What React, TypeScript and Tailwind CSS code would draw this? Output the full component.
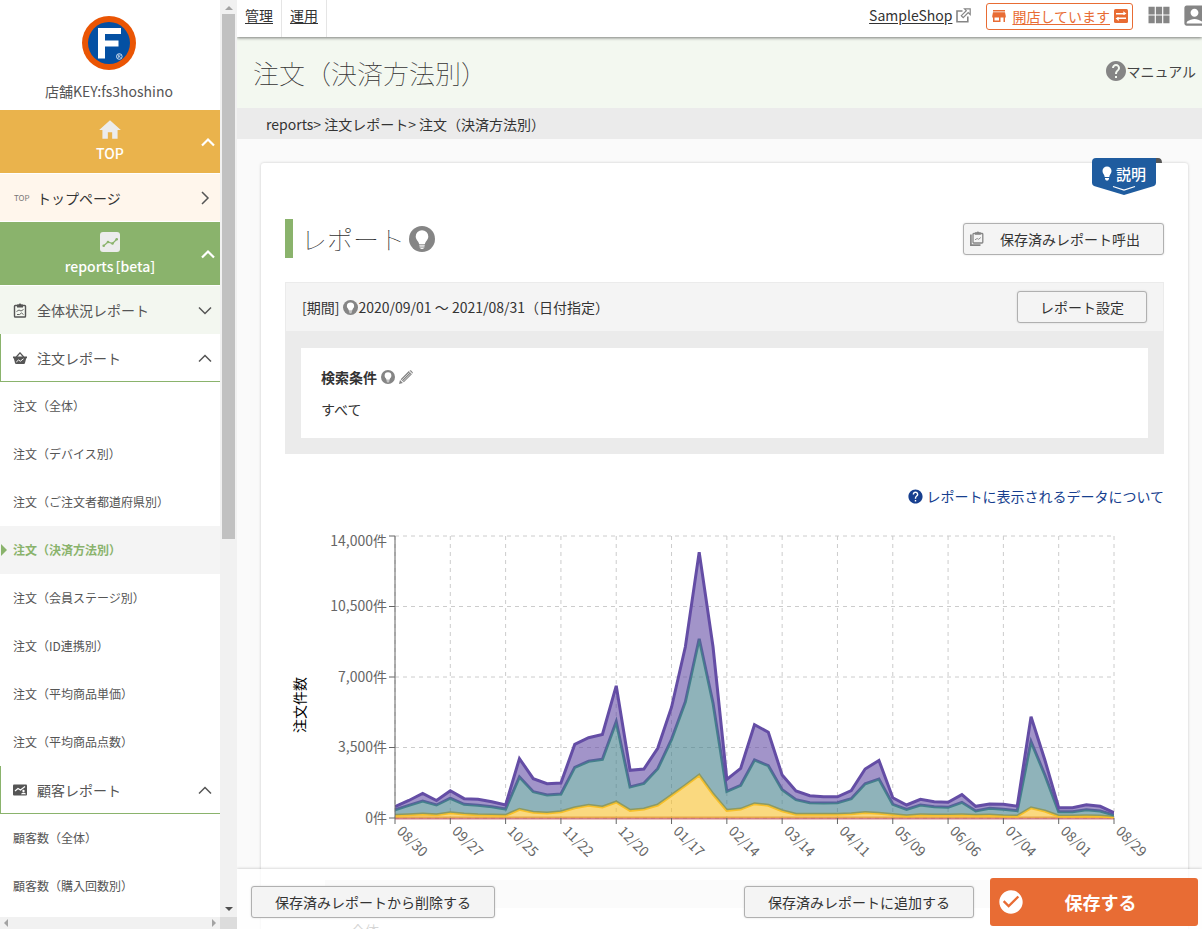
import React from "react";
import {
  MdAccountBox,
  MdCheckCircle,
  MdHelp,
  MdHome,
  MdStore,
  MdViewModule,
} from "react-icons/md";

/* ---------- icons ---------- */

function LogoMark() {
  return (
    <svg viewBox="0 0 54 54" className="size-[54px]" role="img" aria-label="F">
      <circle cx="27" cy="27" r="27" fill="#ea5504" />
      <circle cx="27" cy="27" r="21" fill="#0450a3" />
      <path d="M16 12h23v6H23v6.500h13.500v6H23V42.500h-7z" fill="#fff" />
      <circle cx="37.300" cy="40.500" r="2.800" fill="none" stroke="#fff" strokeWidth="0.800" />
      <path d="M36.300 42v-3h1.400l.6.800-.6.800h-1.200m1 0 1 1.400" fill="none" stroke="#fff" strokeWidth="0.600" />
    </svg>
  );
}

function Chevron({ dir, bold }: { dir: "up" | "down" | "right"; bold?: boolean }) {
  const d = dir === "up" ? "M2 10.500 8 4.500l6 6" : dir === "down" ? "M2 4.500l6 6 6-6" : "M5 1l6 6-6 6";
  return (
    <svg viewBox="0 0 16 14" className="h-3.5 w-4 shrink-0" aria-hidden="true">
      <path d={d} fill="none" stroke="currentColor" strokeWidth={bold ? 2.2 : 1.5} />
    </svg>
  );
}

function ChartTile() {
  return (
    <svg viewBox="0 0 20 20" className="size-5" aria-hidden="true">
      <rect width="20" height="20" rx="3" fill="#ececec" />
      <path d="M3.500 14 8 10l4.500 1.500L17 7" fill="none" stroke="#8ab36c" strokeWidth="1.200" />
      <g fill="#8ab36c">
        <circle cx="3.700" cy="13.800" r="1.300" />
        <circle cx="8" cy="10" r="1.300" />
        <circle cx="12.500" cy="11.500" r="1.300" />
        <circle cx="16.700" cy="7.300" r="1.300" />
      </g>
    </svg>
  );
}

function Clipboard() {
  return (
    <svg viewBox="0 0 14 15" className="h-[15px] w-3.5 shrink-0" aria-hidden="true" fill="none" stroke="currentColor">
      <rect x="1.500" y="2.500" width="11" height="11.500" rx="0.800" strokeWidth="1.400" />
      <path d="M4 1.500h1.600a1.500 1.500 0 0 1 2.800 0H10v3H4z" fill="currentColor" stroke="none" />
      <path d="M3.500 8.500 6 7l2 1 2.500-1.500M4 11.500h2.500l2-1.500 2 1.500" strokeWidth="0.900" />
    </svg>
  );
}

function StackedClipboard() {
  return (
    <svg viewBox="0 0 14 15" className="h-[15px] w-3.5 shrink-0" aria-hidden="true" fill="none" stroke="#858585">
      <path d="M.9 3.500v10.600h9.600" strokeWidth="1.700" />
      <rect x="3" y="2.500" width="9.800" height="9.500" rx="0.800" strokeWidth="1.300" />
      <path d="M5 1.300h1.600a1.400 1.400 0 0 1 2.600 0H10.800v2.500H5z" fill="#858585" stroke="none" />
      <path d="M5 8.800 7.200 7.500l1.400.8 2.200-1.800" strokeWidth="0.900" />
    </svg>
  );
}

function CustomerTile() {
  return (
    <svg viewBox="0 0 14 12" className="h-3 w-3.5 shrink-0" aria-hidden="true">
      <rect y="0.500" width="14" height="11" rx="1" fill="currentColor" />
      <path d="M2 7 5 4.500 7.500 6 12 2.500" fill="none" stroke="#fff" strokeWidth="1.200" />
      <circle cx="10.500" cy="7" r="1.200" fill="#fff" />
      <path d="M8 10.300c0-2.200 5-2.200 5 0z" fill="#fff" />
    </svg>
  );
}

function Basket() {
  return (
    <svg viewBox="0 0 14 12" className="h-3 w-3.5 shrink-0" aria-hidden="true">
      <path d="M3.300 5 7 .9 10.700 5" fill="none" stroke="currentColor" strokeWidth="1.300" />
      <path d="M0 4.500h14v1.700h-.8L12 11q-.2 1-1.200 1H3.200q-1 0-1.200-1L.8 6.200H0z" fill="currentColor" />
      <path d="M3.300 10 5.500 8l1.800 1.200L10.500 6.800" fill="none" stroke="#fff" strokeWidth="1" />
    </svg>
  );
}

function Bulb({ className }: { className: string }) {
  return (
    <svg viewBox="0 0 26 26" className={className} aria-hidden="true">
      <circle cx="13" cy="13" r="13" fill="#858585" />
      <path d="M13 4.200a6.300 6.300 0 0 0-6.300 6.300c0 2.300 1.300 3.700 2.300 5 .6.900.9 1.500 1.100 2.500h5.800c.2-1 .5-1.600 1.100-2.500 1-1.300 2.300-2.700 2.300-5A6.300 6.300 0 0 0 13 4.200z" fill="#fff" />
      <path d="M10.300 19.200h5.400M10.500 20.900h5M11.500 22.400h3" stroke="#fff" strokeWidth="1" />
    </svg>
  );
}

function Pencil() {
  return (
    <svg viewBox="0 0 14 14" className="size-3.5" aria-hidden="true">
      <path d="M0 14l1-4 2.900 2.900zM1.700 9.200 9.800 1.100l3.100 3.100-8.100 8.100zM10.500.6a1.300 1.300 0 0 1 1.700 0l1.300 1.300c.5.500.5 1.200 0 1.600z" fill="#858585" />
      <path d="M2.800 10.200 10.500 2.500M4 11.400l7.700-7.700" stroke="#e4e4e4" strokeWidth="0.800" />
    </svg>
  );
}

function External() {
  return (
    <svg viewBox="0 0 15 15" className="size-[15px]" aria-hidden="true" fill="none" stroke="#858585">
      <path d="M6.500 3H1v10.800h10.800V8.500" strokeWidth="1.600" />
      <path d="M8.500.8h5.700v5.700l-2-1.900-5 5-1.900-1.900 5-5z" strokeWidth="1.200" />
    </svg>
  );
}

function Swap() {
  return (
    <svg viewBox="0 0 14 14" className="size-3.5" aria-hidden="true">
      <rect width="14" height="14" rx="1.500" fill="#e86c34" />
      <path d="M2 4.800h9M12 9.200H3" stroke="#fff" strokeWidth="1.400" />
      <path d="M9.300 2.200 12.500 4.800 9.300 6zM4.700 8 1.500 9.200l3.200 2.700z" fill="#fff" />
    </svg>
  );
}

/* ---------- sidebar ---------- */

const orderItems = [
  "注文（全体）",
  "注文（デバイス別）",
  "注文（ご注文者都道府県別）",
  "注文（決済方法別）",
  "注文（会員ステージ別）",
  "注文（ID連携別）",
  "注文（平均商品単価）",
  "注文（平均商品点数）",
];
const customerItems = ["顧客数（全体）", "顧客数（購入回数別）"];

function SubItem({ label, active }: { label: string; active?: boolean }) {
  return (
    <li>
      <a
        href="#"
        className={
          active
            ? "relative flex h-12 items-center bg-[#f4f4f4] pl-[13px] text-xs font-bold text-[#8ab36c]"
            : "flex h-12 items-center pl-[13px] text-xs"
        }
      >
        {active && (
          <span className="absolute left-px border-y-6 border-l-6 border-y-transparent border-l-[#8ab36c]" />
        )}
        {label}
      </a>
    </li>
  );
}

function GroupButton({ icon, label }: { icon: React.ReactNode; label: string }) {
  return (
    <button type="button" className="flex h-12 w-full items-center border-b border-l border-[#8ab36c] pr-[7px] pl-3">
      {icon}
      <span className="ml-2.5 flex-1 text-left">{label}</span>
      <Chevron dir="up" />
    </button>
  );
}

function Sidebar() {
  return (
    <aside className="flex w-[237px] shrink-0 flex-col bg-white">
      <div className="flex min-h-0 flex-1">
        <div className="w-[220px] overflow-hidden text-sm text-[#555]">
          <div className="flex h-[110px] flex-col items-center pt-4 pr-0.5">
            <LogoMark />
            <p className="mt-[11px] text-[#555]">店舗KEY:fs3hoshino</p>
          </div>
          <button type="button" className="flex h-[63px] w-full items-center bg-[#eab34c] pr-1 text-white">
            <span className="flex flex-1 flex-col items-center pb-[3px] pl-5">
              <MdHome className="size-[26px] text-[#ececec]" aria-hidden="true" />
              <span className="leading-5 font-medium">TOP</span>
            </span>
            <Chevron dir="up" bold />
          </button>
          <a href="#" className="flex h-[49px] items-center border-y border-white bg-[#fff6ec] pr-[7px] pl-3.5">
            <span className="w-[23px] text-[8px] text-[#777]" aria-hidden="true">TOP</span>
            <span className="flex-1 text-[#333]">トップページ</span>
            <Chevron dir="right" />
          </a>
          <button type="button" className="flex h-[63px] w-full items-center bg-[#8ab36c] pr-1 text-white">
            <span className="flex flex-1 flex-col items-center gap-1 pl-5">
              <ChartTile />
              <span className="flex gap-0.5 leading-5 font-medium">
                <span>reports</span>
                <span>[beta]</span>
              </span>
            </span>
            <Chevron dir="up" bold />
          </button>
          <button
            type="button"
            className="flex h-[49px] w-full items-center border-t border-white bg-[#f3f7f0] pr-[7px] pl-[13px]"
          >
            <Clipboard />
            <span className="ml-2.5 flex-1 text-left">全体状況レポート</span>
            <Chevron dir="down" />
          </button>
          <GroupButton icon={<Basket />} label="注文レポート" />
          <ul>
            {orderItems.map((label, i) => (
              <SubItem key={label} label={label} active={i === 3} />
            ))}
          </ul>
          <GroupButton icon={<CustomerTile />} label="顧客レポート" />
          <ul>
            {customerItems.map((label) => (
              <SubItem key={label} label={label} />
            ))}
          </ul>
        </div>
        <div className="flex flex-1 flex-col items-center justify-between bg-[#f1f1f1] py-1.5">
          <span className="border-x-4 border-b-4 border-x-transparent border-b-[#a3a3a3]" />
          <span className="mt-1 h-[58%] w-[13px] bg-[#c1c1c1]" />
          <span className="flex-1" />
          <span className="border-x-4 border-t-4 border-x-transparent border-t-[#505050]" />
        </div>
      </div>
      <div className="flex h-3">
        <div className="flex w-[220px] items-center justify-between bg-[#f1f1f1] px-1">
          <span className="border-y-4 border-r-4 border-y-transparent border-r-[#a3a3a3]" />
          <span className="border-y-4 border-l-4 border-y-transparent border-l-[#a3a3a3]" />
        </div>
        <div className="flex-1 bg-[#dcdcdc]" />
      </div>
    </aside>
  );
}

/* ---------- chart ---------- */

const totals = [
  570, 870, 1215, 870, 1350, 960, 930, 810, 645, 2950, 1950, 1700, 1735, 3655, 3985, 4150, 6560, 2370, 2430, 3460, 5500,
  8500, 13200, 8500, 1920, 2465, 4630, 4260, 2130, 1340, 1105, 1055, 1055, 1360, 2430, 2860, 1005, 645, 930, 810, 780,
  1160, 580, 700, 680, 590, 5030, 2880, 510, 510, 660, 580, 265,
];
const middle = [
  400, 630, 845, 645, 980, 680, 630, 560, 445, 2035, 1305, 1140, 1190, 2515, 2815, 2915, 4780, 1540, 1720, 2445, 3905,
  5770, 8900, 5705, 1325, 1625, 2880, 2595, 1405, 910, 760, 745, 760, 960, 1700, 1935, 680, 430, 645, 560, 530, 780, 350,
  480, 430, 360, 3795, 2135, 310, 310, 410, 350, 150,
];
const lower = [
  135, 165, 200, 165, 255, 200, 165, 150, 135, 430, 285, 250, 310, 510, 630, 545, 795, 380, 445, 645, 1125, 1620, 2130,
  1190, 380, 445, 710, 630, 360, 190, 190, 185, 185, 215, 275, 235, 175, 115, 165, 150, 150, 165, 135, 150, 115, 100,
  510, 345, 100, 100, 115, 100, 50,
];
const base = totals.map(() => 0);

const dates = [
  "08/30", "09/27", "10/25", "11/22", "12/20", "01/17", "02/14",
  "03/14", "04/11", "05/09", "06/06", "07/04", "08/01", "08/29",
];
const levels = ["0件", "3,500件", "7,000件", "10,500件", "14,000件"];

const LEFT = 110;
const TOP = 16;
const PLOT_W = 719;
const PLOT_H = 282;
const BOTTOM = TOP + PLOT_H;

const px = (i: number) => LEFT + (i * PLOT_W) / (totals.length - 1);
const py = (v: number) => BOTTOM - (v * PLOT_H) / 14000;
const line = (values: number[]) => values.map((v, i) => `${px(i)},${py(v)}`);

function Band({ upper, under, color }: { upper: number[]; under: number[]; color: string }) {
  return (
    <g>
      <polygon points={[...line(upper), ...line(under).reverse()].join(" ")} fill={color} fillOpacity="0.6" />
      <polyline points={line(upper).join(" ")} fill="none" stroke={color} strokeWidth="3" />
    </g>
  );
}

function OrderChart() {
  return (
    <svg viewBox="0 0 879 344" className="block w-full" role="img" aria-label="注文件数">
      <clipPath id="plot">
        <rect x={LEFT} y={TOP} width={PLOT_W} height={PLOT_H + 2} />
      </clipPath>
      <g stroke="#ccc" strokeDasharray="4 4">
        {levels.map((l, i) => (
          <line key={l} x1={LEFT} x2={LEFT + PLOT_W} y1={py(i * 3500)} y2={py(i * 3500)} />
        ))}
        {dates.map((d, i) => (
          <line key={d} x1={px(i * 4)} x2={px(i * 4)} y1={TOP} y2={BOTTOM} />
        ))}
      </g>
      <g clipPath="url(#plot)">
        <polyline points={line(base).join(" ")} fill="none" stroke="#bf4a4f" strokeOpacity="0.7" strokeWidth="3" />
        <Band upper={lower} under={base} color="#f7c02a" />
        <Band upper={middle} under={lower} color="#44808c" />
        <Band upper={totals} under={middle} color="#644da5" />
      </g>
      <g stroke="#666">
        <line x1={LEFT} x2={LEFT} y1={TOP} y2={BOTTOM} />
        {levels.map((l, i) => (
          <line key={l} x1={LEFT - 6} x2={LEFT} y1={py(i * 3500)} y2={py(i * 3500)} />
        ))}
        {dates.map((d, i) => (
          <line key={d} x1={px(i * 4)} x2={px(i * 4)} y1={BOTTOM} y2={BOTTOM + 6} />
        ))}
      </g>
      <g fill="#666" fontSize="14">
        {levels.map((l, i) => (
          <text key={l} x={LEFT - 8} y={i === 4 ? TOP + 10 : Math.floor(py(i * 3500)) + 5} textAnchor="end">
            {l}
          </text>
        ))}
        {dates.map((d, i) => (
          <text key={d} transform={`translate(${px(i * 4) + 1} ${BOTTOM + 14}) rotate(45)`}>
            {d}
          </text>
        ))}
      </g>
      <text transform="translate(20 185) rotate(-90)" textAnchor="middle" fontSize="14" fill="#000">
        注文件数
      </text>
    </svg>
  );
}

/* ---------- main ---------- */

const plainButton =
  "h-8 rounded-[3px] border border-[#b0b0b0] bg-[#f4f4f4] text-sm text-[#333] shadow-[0_0_2px_rgba(0,0,0,0.15)]";

function TopBar() {
  return (
    <header className="relative z-10 flex h-[37px] shrink-0 bg-white text-sm shadow-[0_1px_3px_rgba(0,0,0,0.5)]">
      <nav className="flex flex-1">
        <a href="#" className="border-r border-[#e5e5e5] px-2 pt-[5px] underline underline-offset-2">管理</a>
        <a href="#" className="border-r border-[#e5e5e5] px-2 pt-[5px] underline underline-offset-2">運用</a>
      </nav>
      <div className="-mr-1.5 flex h-8 items-center">
        <a href="#" className="flex items-center gap-1 pb-0.5">
          <span className="underline underline-offset-2">SampleShop</span>
          <External />
        </a>
        <button
          type="button"
          className="ml-[15px] flex h-[27px] items-center gap-1 rounded-[3px] border border-[#e86c34] pr-1 pl-[3px] text-[#e86c34]"
        >
          <MdStore className="size-[18px]" aria-hidden="true" />
          <span className="underline underline-offset-2">開店しています</span>
          <Swap />
        </button>
        <button type="button" aria-label="アプリ" className="ml-3 pb-0.5 text-[#858585]">
          <MdViewModule className="size-7" />
        </button>
        <button type="button" aria-label="アカウント" className="ml-2 pb-0.5 text-[#858585]">
          <MdAccountBox className="size-[27px]" />
        </button>
      </div>
    </header>
  );
}

function GuideBadge() {
  return (
    <button type="button" className="absolute -top-[5px] right-[26px] flex h-[38px] w-[70px] items-start">
      <svg viewBox="0 0 70 38" className="absolute inset-0" aria-hidden="true">
        <path d="M62 0h4q4 0 4 5h-8z" fill="#555" />
        <path d="M4 0h60v25q0 2-2 3L32 37 2 28q-2-1-2-3V4q0-4 4-4z" fill="#1f5c9f" />
        <path d="M21 28.500 32 32l11-3.500" fill="none" stroke="#fff" strokeWidth="1.300" />
        <path d="M15 8.500a4.500 4.500 0 0 0-4.500 4.500c0 2.500 2 3.500 2.200 6h4.600c.2-2.500 2.200-3.500 2.200-6A4.500 4.500 0 0 0 15 8.500zM13 20h4v1l-1 1.500h-2l-1-1.500z" fill="#fff" />
      </svg>
      <span className="relative flex h-[31px] items-center gap-px pl-6 text-[15px] font-medium text-white">説明</span>
    </button>
  );
}

export default function App() {
  return (
    <div className="flex h-screen overflow-hidden bg-[#fafafa] font-['Noto_Sans_CJK_JP','Noto_Sans',sans-serif] text-sm text-[#333]">
      <Sidebar />
      <main className="relative flex min-w-0 flex-1 flex-col overflow-hidden">
        <TopBar />
        <div className="min-h-0 flex-1 overflow-y-auto [scrollbar-width:none]">
          <div className="flex h-[71px] items-center justify-between bg-[#f3f8f0] pr-1.5 pl-4">
            <h1 className="text-[26px] font-thin">注文（決済方法別）</h1>
            <a href="#" className="flex items-center pb-[3px] text-[#444]">
              <MdHelp className="-mr-0.5 size-6 text-[#858585]" aria-hidden="true" />
              マニュアル
            </a>
          </div>
          <p className="flex h-[31px] items-center bg-[#ebebeb] pl-[29px]">
            <span>reports&gt; 注文レポート&gt; 注文（決済方法別）</span>
          </p>

          <section className="relative mt-6 mr-3.5 mb-20 ml-6 rounded-[3px] bg-white px-6 pt-14 shadow-[0_0_3px_rgba(0,0,0,0.2)]">
            <GuideBadge />
            <div className="flex h-[39px] items-center justify-between">
              <div className="flex h-full items-center border-l-8 border-[#8ab36c] pl-2">
                <h2 className="text-[26px] font-thin">レポート</h2>
                <Bulb className="ml-1 size-[26px]" />
              </div>
              <button type="button" className={`${plainButton} flex items-center pr-[23px] pl-1.5`}>
                <StackedClipboard />
                <span className="ml-4">保存済みレポート呼出</span>
              </button>
            </div>

            <div className="mt-6 border border-[#ebebeb] bg-[#ebebeb]">
              <div className="flex h-12 items-center justify-between bg-[#f4f4f4] px-4">
                <p className="flex items-center">
                  <span>[期間]</span>
                  <Bulb className="ml-1 size-[15px]" />
                  <span>2020/09/01 〜 2021/08/31（日付指定）</span>
                </p>
                <button type="button" className={`${plainButton} px-[22px]`}>レポート設定</button>
              </div>
              <div className="mx-[15px] mt-[17px] mb-[15px] h-[90px] bg-white px-5 pt-[19px]">
                <div className="flex items-center">
                  <h3 className="font-bold">検索条件</h3>
                  <Bulb className="ml-1 size-3.5" />
                  <button type="button" aria-label="編集" className="ml-1">
                    <Pencil />
                  </button>
                </div>
                <p className="mt-3">すべて</p>
              </div>
            </div>

            <div className="mt-8 flex justify-end">
              <a href="#" className="flex items-center gap-0.5 text-[#173f8f]">
                <MdHelp className="size-[17px]" aria-hidden="true" />
                レポートに表示されるデータについて
              </a>
            </div>

            <div className="mt-3.5">
              <OrderChart />
            </div>

            <table className="mt-4 ml-10 w-[calc(100%-80px)]">
              <thead>
                <tr>
                  <th className="h-7 bg-[#ebebeb]" />
                </tr>
              </thead>
              <tbody>
                <tr>
                  <td className="pt-3 pl-[26px]">全体</td>
                </tr>
              </tbody>
            </table>
          </section>
        </div>

        <footer className="absolute inset-x-0 bottom-0 flex h-[60px] items-center bg-white/80 pr-1 pl-3.5 shadow-[0_0_3px_rgba(0,0,0,0.25)]">
          <button type="button" className={`${plainButton} mt-1.5 px-[23px]`}>保存済みレポートから削除する</button>
          <span className="flex-1" />
          <button type="button" className={`${plainButton} mt-1.5 px-[23px]`}>保存済みレポートに追加する</button>
          <button
            type="button"
            className="mt-1.5 ml-4 flex h-12 w-52 items-center rounded-[3px] bg-[#e86c34] pl-[7px] text-white"
          >
            <MdCheckCircle className="size-7" aria-hidden="true" />
            <span className="flex-1 pr-[22px] text-center text-lg font-bold">保存する</span>
          </button>
        </footer>
      </main>
    </div>
  );
}
